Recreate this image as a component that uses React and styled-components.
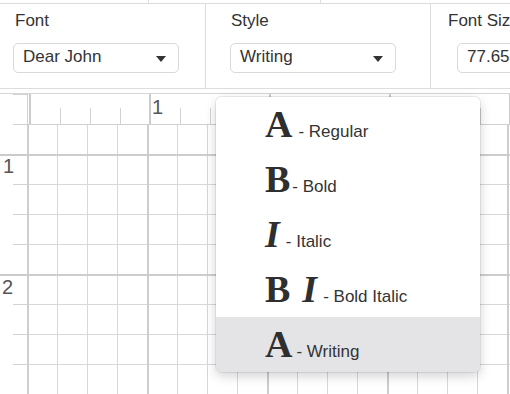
import React from 'react';
import styled, { createGlobalStyle } from 'styled-components';

const GlobalStyle = createGlobalStyle`
  html, body {
    margin: 0;
    padding: 0;
    background: #fff;
  }
  body {
    font-family: "Liberation Sans", Arial, sans-serif;
    color: #333;
  }
  * { box-sizing: border-box; }
`;

const Page = styled.div`
  position: relative;
  width: 510px;
  height: 394px;
  overflow: hidden;
  display: flex;
  flex-direction: column;
  background: #fff;
`;

const TopStrip = styled.div`
  display: flex;
  height: 4px;
  flex: none;
  border-bottom: 1px solid #dcdcdc;
`;

const StripCell = styled.div`
  flex: none;
  width: ${p => p.w}px;
  border-right: 1px solid #dcdcdc;
`;

const Panel = styled.div`
  display: flex;
  flex: none;
  height: 85px;
  border-bottom: 1px solid #dcdcdc;
`;

const Column = styled.div`
  flex: none;
  width: ${p => p.w}px;
  padding: 7px 0 0 ${p => p.pad}px;
  border-right: ${p => (p.last ? 'none' : '1px solid #dcdcdc')};
  display: flex;
  flex-direction: column;
  gap: 12px;
  white-space: nowrap;
`;

const Label = styled.div`
  font-size: 17px;
  line-height: 20px;
  padding-left: ${p => p.indent || 0}px;
  color: #333;
`;

const Select = styled.div`
  position: relative;
  width: 166px;
  height: 30px;
  border: 1px solid #d9d9d9;
  border-radius: 5px;
  padding: 0 0 2px 9px;
  font-size: 17px;
  line-height: 26px;
  color: #333;
  margin-left: ${p => p.offset || 0}px;
`;

const Caret = styled.span`
  position: absolute;
  right: 12px;
  top: 12px;
  width: 0;
  height: 0;
  border-left: 5px solid transparent;
  border-right: 5px solid transparent;
  border-top: 6px solid #333;
`;

const Gap = styled.div`
  height: 4px;
  flex: none;
`;

const Workspace = styled.div`
  flex: 1;
  display: grid;
  grid-template-columns: 28px 1fr;
  grid-template-rows: 31px 1fr;
  border-top: 1px solid #d6d6d6;
`;

const LeftRuler = styled.div`
  position: relative;
  grid-row: 1 / 3;
  grid-column: 1;
  border-right: 1px solid #d0d0d0;
  background:
    linear-gradient(to bottom, #cbcbcb 2px, transparent 2px) 0 60px / 100% 120px repeat-y,
    linear-gradient(to bottom, #d2d2d2 1px, transparent 1px) right 0 top 0 / 14px 30px repeat-y;
`;

const TopRuler = styled.div`
  position: relative;
  grid-row: 1;
  grid-column: 2;
  border-bottom: 1px solid #d0d0d0;
  background:
    linear-gradient(to right, #cbcbcb 2px, transparent 2px) 121px 0 / 120px 100% repeat-x,
    linear-gradient(to right, #d2d2d2 1px, transparent 1px) left 2px bottom 0 / 30px 16px repeat-x;
`;

const RulerNumber = styled.span`
  position: absolute;
  font-size: 20px;
  line-height: 20px;
  color: #555;
`;

const Canvas = styled.div`
  grid-row: 2;
  grid-column: 2;
  background:
    linear-gradient(to right, #cdcdcd 2px, transparent 2px) 119px 0 / 120px 100%,
    linear-gradient(to bottom, #cdcdcd 2px, transparent 2px) 0 29px / 100% 120px,
    linear-gradient(to right, #d8d8d8 1px, transparent 1px) 29px 0 / 30px 100%,
    linear-gradient(to bottom, #d8d8d8 1px, transparent 1px) 0 29px / 100% 30px;
`;

const Menu = styled.div`
  position: absolute;
  left: 216px;
  top: 97px;
  width: 264px;
  background: #fff;
  border-radius: 6px;
  overflow: hidden;
  box-shadow: 0 0 0 1px rgba(0, 0, 0, 0.07), 0 4px 12px rgba(0, 0, 0, 0.18);
`;

const MenuItem = styled.div`
  display: flex;
  align-items: baseline;
  height: 55px;
  padding-left: 49px;
  background: ${p => (p.active ? '#e4e4e6' : '#fff')};
`;

const Glyph = styled.span`
  font-family: "Liberation Serif", "Times New Roman", serif;
  font-size: 38px;
  line-height: 54px;
  font-weight: 700;
  font-style: ${p => (p.italic ? 'italic' : 'normal')};
  color: #2f2f2f;
  margin-right: ${p => p.space}px;
`;

const ItemText = styled.span`
  font-size: 17px;
  color: #333;
`;

const styles = [
  { glyphs: [{ ch: 'A', space: 6 }], label: '- Regular' },
  { glyphs: [{ ch: 'B', space: 2 }], label: '- Bold' },
  { glyphs: [{ ch: 'I', italic: true, space: 6 }], label: '- Italic' },
  {
    glyphs: [
      { ch: 'B', space: 12 },
      { ch: 'I', italic: true, space: 6 },
    ],
    label: '- Bold Italic',
  },
  { glyphs: [{ ch: 'A', space: 4 }], label: '- Writing', active: true },
];

const App = () => (
  <>
    <GlobalStyle />
    <Page>
      <TopStrip>
        <StripCell w={149} />
        <StripCell w={172} />
      </TopStrip>
      <Panel>
        <Column w={206} pad={13}>
          <Label indent={2}>Font</Label>
          <Select>
            Dear John
            <Caret />
          </Select>
        </Column>
        <Column w={225} pad={24}>
          <Label indent={1}>Style</Label>
          <Select>
            Writing
            <Caret />
          </Select>
        </Column>
        <Column w={120} pad={17} last>
          <Label>Font Size</Label>
          <Select offset={9}>77.65</Select>
        </Column>
      </Panel>
      <Gap />
      <Workspace>
        <LeftRuler>
          <RulerNumber style={{ left: 3, top: 62 }}>1</RulerNumber>
          <RulerNumber style={{ left: 2, top: 183 }}>2</RulerNumber>
        </LeftRuler>
        <TopRuler>
          <RulerNumber style={{ left: 124, top: 3 }}>1</RulerNumber>
        </TopRuler>
        <Canvas />
      </Workspace>
      <Menu>
        {styles.map(item => (
          <MenuItem key={item.label} active={item.active}>
            {item.glyphs.map((g, i) => (
              <Glyph key={i} italic={g.italic} space={g.space}>
                {g.ch}
              </Glyph>
            ))}
            <ItemText>{item.label}</ItemText>
          </MenuItem>
        ))}
      </Menu>
    </Page>
  </>
);

export default App;
